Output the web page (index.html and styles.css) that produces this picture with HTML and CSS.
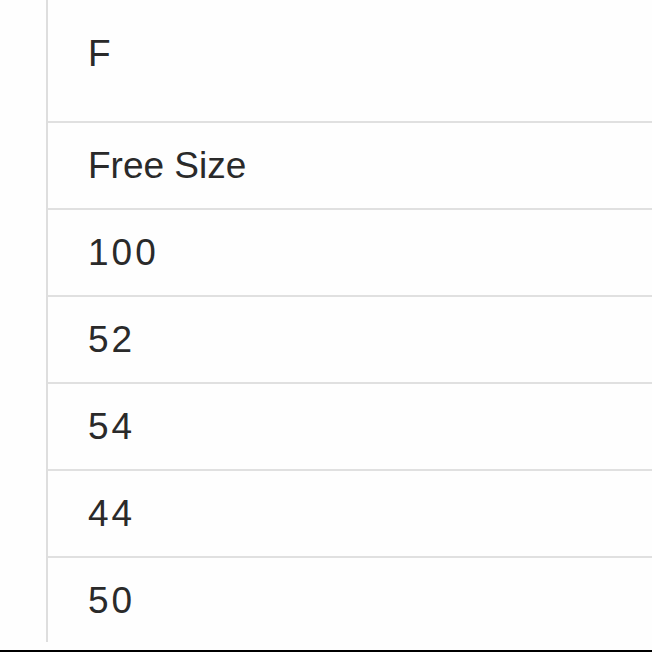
FILE: index.html
```html
<!DOCTYPE html>
<html>
<head>
<meta charset="utf-8">
<link rel="stylesheet" href="styles.css">
</head>
<body>
<div class="page">
  <div class="table">
    <div class="row first"><span class="cell">F</span></div>
    <div class="row"><span class="cell">Free Size</span></div>
    <div class="row"><span class="cell num">100</span></div>
    <div class="row"><span class="cell num">52</span></div>
    <div class="row"><span class="cell num">54</span></div>
    <div class="row"><span class="cell num">44</span></div>
    <div class="row last"><span class="cell num">50</span></div>
  </div>
  <div class="bar"></div>
</div>
</body>
</html>
```
FILE: styles.css
```css
html, body {
  margin: 0;
  padding: 0;
  background: #fefefe;
}
.page {
  width: 652px;
  height: 652px;
  display: flex;
  flex-direction: column;
  overflow: hidden;
}
.table {
  margin-left: 46px;
  height: 642px;
  border-left: 2px solid #dedede;
  display: flex;
  flex-direction: column;
  overflow: hidden;
}
.row {
  height: 85px;
  flex: none;
  display: flex;
  align-items: center;
  padding-left: 40px;
  border-bottom: 2px solid #e0e0e0;
  font-family: "Liberation Sans", Arial, sans-serif;
  font-size: 37px;
  color: #2a2a2a;
}
.row.first {
  height: 106px;
  padding-bottom: 15px;
}
.row.last {
  border-bottom: none;
}
.cell {
  line-height: 1;
}
.cell.num {
  letter-spacing: 3px;
}
.bar {
  margin-top: auto;
  height: 2px;
  background: #000;
}
```
